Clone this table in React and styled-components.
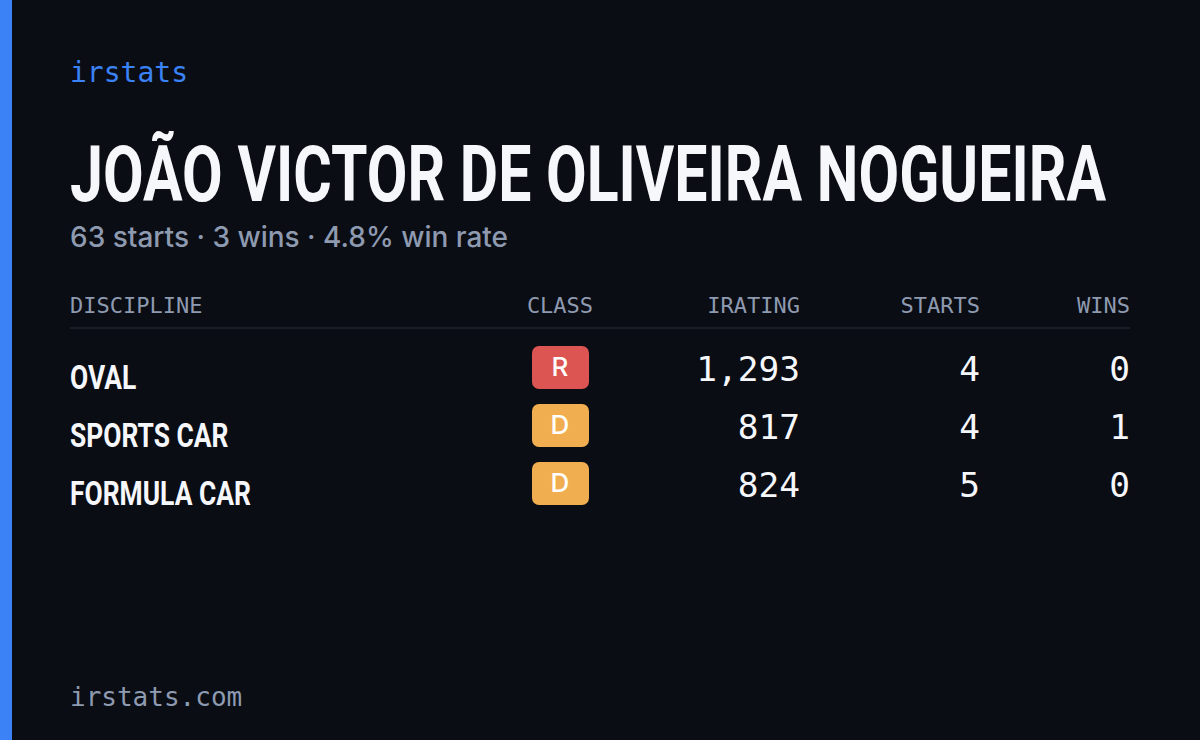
import React from "react";
import styled, { createGlobalStyle } from "styled-components";

const Global = createGlobalStyle`
  html, body { margin: 0; padding: 0; background: #0a0d14; }
  * { box-sizing: border-box; }
`;

const MONO = `"DejaVu Sans Mono", "Liberation Mono", monospace`;
const COND = `Roboto, "Liberation Sans", sans-serif`;

const Card = styled.div`
  width: 1200px;
  height: 740px;
  display: flex;
  background: #0a0d14;
  overflow: hidden;
`;

const Accent = styled.div`
  width: 12px;
  flex: none;
  background: #3b82f6;
`;

const Main = styled.main`
  flex: 1;
  min-width: 0;
  display: flex;
  flex-direction: column;
  padding: 59px 70px 30px 58px;
`;

const Logo = styled.div`
  font-family: ${MONO};
  font-size: 28px;
  line-height: 28px;
  color: #3b82f6;
`;

const Title = styled.h1`
  margin: 50px 0 0;
  font-family: ${COND};
  font-weight: 700;
  font-size: 77px;
  line-height: 77px;
  color: #f6f7fb;
  white-space: nowrap;
  min-width: 0;
`;

const Squeeze = styled.span`
  display: inline-block;
  transform: scaleX(${(p) => p.$x});
  transform-origin: left center;
`;

const Subtitle = styled.div`
  margin-top: 7px;
  font-family: Inter, "Noto Sans", sans-serif;
  font-weight: 500;
  font-size: 28px;
  line-height: 32px;
  color: #8e9ab0;
`;

const Table = styled.div`
  margin-top: 40px;
  display: flex;
  flex-direction: column;
`;

const COLS = "430px 120px 180px 180px 150px";

const HeadRow = styled.div`
  display: grid;
  grid-template-columns: ${COLS};
  padding-bottom: 8px;
  border-bottom: 2px solid #1a1e29;
`;

const HeadCell = styled.div`
  font-family: ${MONO};
  font-size: 22px;
  line-height: 26px;
  color: #8e9ab0;
  text-align: ${(p) => p.$align || "left"};
`;

const Body = styled.div`
  padding-top: 9px;
  display: flex;
  flex-direction: column;
`;

const Row = styled.div`
  display: grid;
  grid-template-columns: ${COLS};
  height: 58px;
  align-items: center;
`;

const Discipline = styled.div`
  padding-top: 21px;
  font-family: ${COND};
  font-weight: 700;
  font-size: 33px;
  line-height: 33px;
  color: #f6f7fb;
  white-space: nowrap;
`;

const BadgeCell = styled.div`
  display: flex;
  justify-content: center;
`;

const Badge = styled.div`
  width: 57px;
  height: 43px;
  border-radius: 7px;
  background: ${(p) => p.$color};
  color: #ffffff;
  display: flex;
  align-items: center;
  justify-content: center;
  font-family: Inter, "Noto Sans", sans-serif;
  font-weight: 500;
  font-size: 26px;
  line-height: 1;
`;

const Num = styled.div`
  padding-top: 3px;
  font-family: ${MONO};
  font-size: 34.5px;
  line-height: 34px;
  color: #f6f7fb;
  text-align: right;
`;

const Spacer = styled.div`
  flex: 1;
`;

const Footer = styled.div`
  font-family: ${MONO};
  font-size: 26px;
  line-height: 26px;
  color: #8e9ab0;
`;

const CLASS_COLORS = { R: "#dc5552", D: "#f0ae50" };

const rows = [
  { name: "OVAL", cls: "R", irating: "1,293", starts: 4, wins: 0 },
  { name: "SPORTS CAR", cls: "D", irating: "817", starts: 4, wins: 1 },
  { name: "FORMULA CAR", cls: "D", irating: "824", starts: 5, wins: 0 },
];

export default function App() {
  return (
    <>
      <Global />
      <Card>
        <Accent />
        <Main>
          <Logo>irstats</Logo>
          <Title>
            <Squeeze $x={0.766}>JOÃO VICTOR DE OLIVEIRA NOGUEIRA</Squeeze>
          </Title>
          <Subtitle>63 starts · 3 wins · 4.8% win rate</Subtitle>
          <Table>
            <HeadRow>
              <HeadCell>DISCIPLINE</HeadCell>
              <HeadCell $align="center">CLASS</HeadCell>
              <HeadCell $align="right">IRATING</HeadCell>
              <HeadCell $align="right">STARTS</HeadCell>
              <HeadCell $align="right">WINS</HeadCell>
            </HeadRow>
            <Body>
              {rows.map((r) => (
                <Row key={r.name}>
                  <Discipline>
                    <Squeeze $x={0.8}>{r.name}</Squeeze>
                  </Discipline>
                  <BadgeCell>
                    <Badge $color={CLASS_COLORS[r.cls]}>{r.cls}</Badge>
                  </BadgeCell>
                  <Num>{r.irating}</Num>
                  <Num>{r.starts}</Num>
                  <Num>{r.wins}</Num>
                </Row>
              ))}
            </Body>
          </Table>
          <Spacer />
          <Footer>irstats.com</Footer>
        </Main>
      </Card>
    </>
  );
}
